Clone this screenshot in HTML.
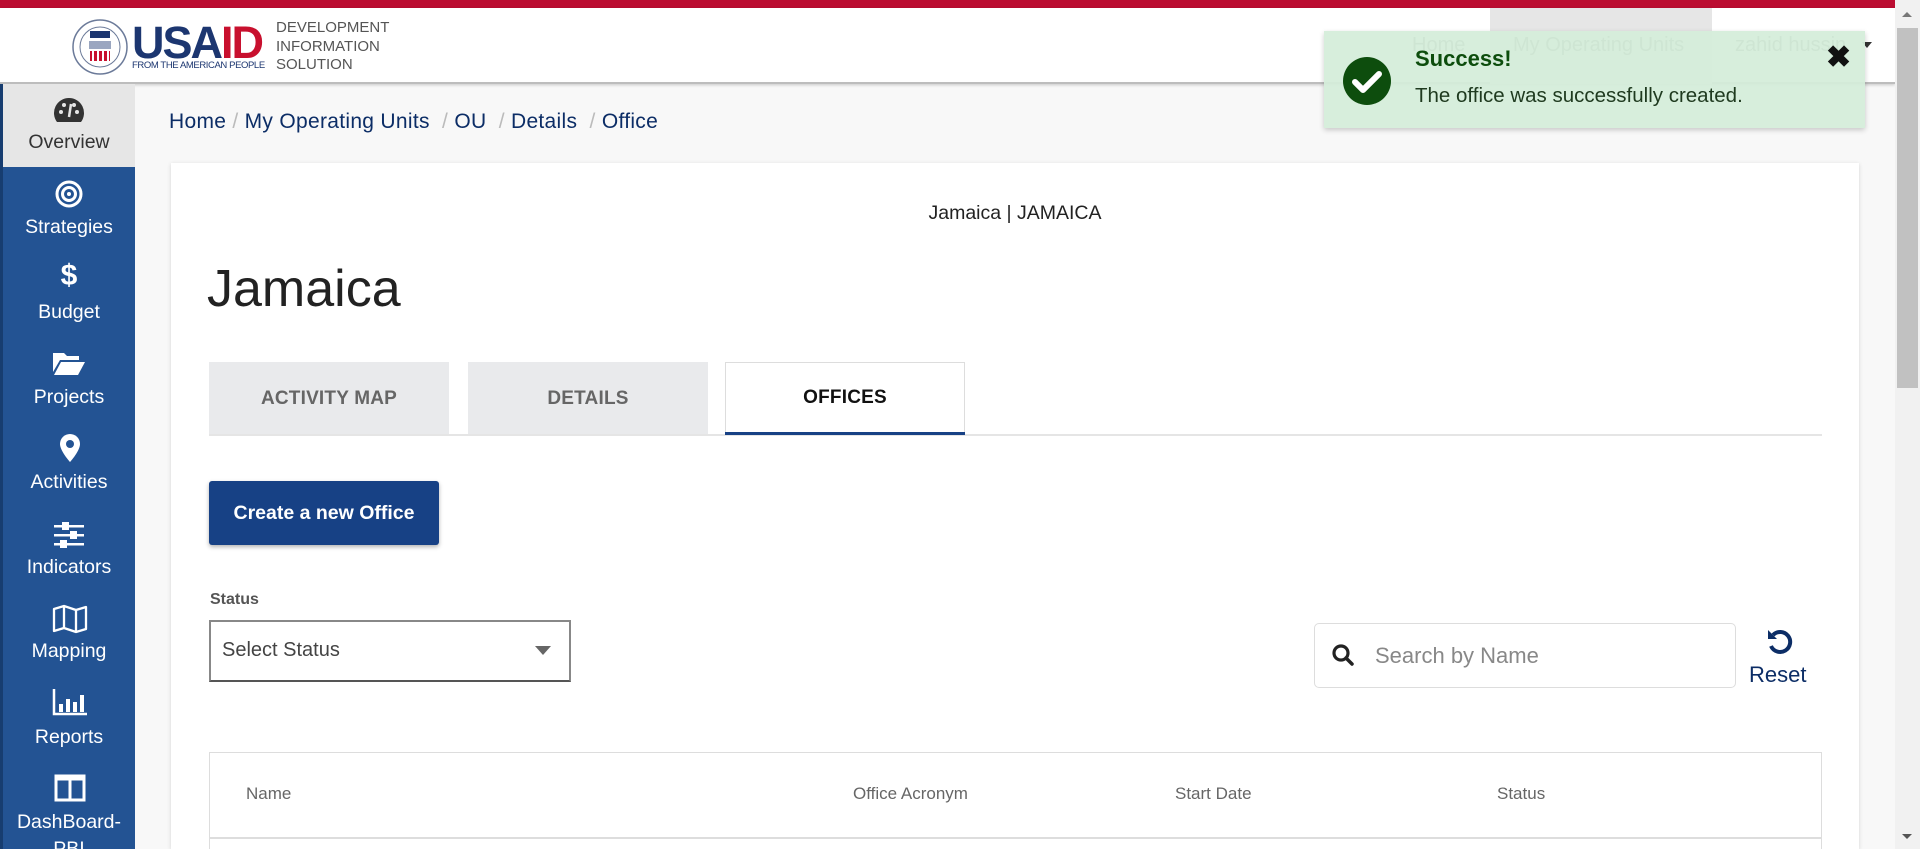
<!DOCTYPE html>
<html style="overflow:hidden"><head><meta charset="utf-8"><style>
*{box-sizing:border-box;margin:0;padding:0}
html,body{width:1920px;height:849px;overflow:hidden}
body{background:#f8f8f8;font-family:"Liberation Sans",Arial,sans-serif;position:relative}
.abs{position:absolute}
.top{left:0;top:0;width:1895px;height:8px;background:#bb0d31}
.hdr{left:0;top:8px;width:1895px;height:76px;background:#fff;border-bottom:2px solid #bdbdbd;box-shadow:0 1px 3px rgba(0,0,0,.2)}
.side{left:0;top:84px;width:135px;height:765px;background:#235393;border-left:3px solid #173d70}
.lbl{position:absolute;left:0;width:132px;text-align:center;color:#fff;font-size:19.5px}
.scroll{left:1895px;top:0;width:25px;height:849px;background:#f1f1f1}
.card{left:171px;top:163px;width:1688px;height:686px;background:#fff;box-shadow:0 1px 4px rgba(0,0,0,.15)}
.tab{position:absolute;top:362px;height:73px;width:240px;background:#e9eaec;color:#666;font-size:19px;font-weight:bold;text-align:center;line-height:73px;letter-spacing:.2px}
</style></head><body>
<div class="abs top"></div>
<div class="abs hdr"></div>
<svg class="abs" style="left:70px;top:17px" width="60" height="60" viewBox="0 0 60 60">
<circle cx="30" cy="30" r="27" fill="#fff" stroke="#6b7a99" stroke-width="1.5"/>
<circle cx="30" cy="30" r="20" fill="none" stroke="#6b7a99" stroke-width="1"/>
<rect x="20" y="14" width="20" height="7" fill="#1c3670"/>
<rect x="19" y="24" width="22" height="8" fill="#9aa6c0"/>
<rect x="20" y="34" width="20" height="10" fill="#c8102e"/>
<rect x="22" y="34" width="2" height="10" fill="#fff"/><rect x="27" y="34" width="2" height="10" fill="#fff"/><rect x="32" y="34" width="2" height="10" fill="#fff"/><rect x="37" y="34" width="2" height="10" fill="#fff"/>
</svg>
<div class="abs" style="left:132px;top:18px;font-size:45px;font-weight:bold;letter-spacing:-2px;line-height:50px"><span style="color:#1c3670">USA</span><span style="color:#c8102e">ID</span></div>
<div class="abs" style="left:132px;top:60px;font-size:9.5px;color:#1c3670;letter-spacing:-.4px">FROM THE AMERICAN PEOPLE</div>
<div class="abs" style="left:276px;top:19px;font-size:15px;line-height:18.5px;color:#555">DEVELOPMENT<br>INFORMATION<br>SOLUTION</div>
<div class="abs" style="left:1490px;top:8px;width:222px;height:76px;background:#e6e6e6"></div>
<div class="abs" style="left:1412px;top:34px;font-size:20px;color:#666">Home</div>
<div class="abs" style="left:1513px;top:34px;font-size:20px;color:#666">My Operating Units</div>
<div class="abs" style="left:1735px;top:34px;font-size:20px;color:#666">zahid hussin</div>
<div class="abs" style="left:1862px;top:42px;border-left:5px solid transparent;border-right:5px solid transparent;border-top:6px solid #333"></div>
<div class="abs scroll"></div>
<div class="abs" style="left:1897px;top:28px;width:21px;height:360px;background:#c1c1c1"></div>
<div class="abs" style="left:1902px;top:12px;border-left:5px solid transparent;border-right:5px solid transparent;border-bottom:5px solid #777"></div>
<div class="abs" style="left:1902px;top:834px;border-left:5px solid transparent;border-right:5px solid transparent;border-top:5px solid #555"></div>
<div class="abs side">
 <div style="position:absolute;left:0;top:0;width:132px;height:83px;background:#e6e6e6"></div>
</div>
<svg class="abs" style="left:53px;top:97px" width="32" height="26" viewBox="0 0 32 26"><path d="M16 1A15 15 0 0 0 4 25h24A15 15 0 0 0 16 1z" fill="#333"/><circle cx="8" cy="15" r="2" fill="#e6e6e6"/><circle cx="11" cy="8" r="2" fill="#e6e6e6"/><circle cx="21" cy="8" r="2" fill="#e6e6e6"/><circle cx="24" cy="15" r="2" fill="#e6e6e6"/><path d="M18 7l-2 13" stroke="#e6e6e6" stroke-width="2.5"/></svg>
<div class="lbl" style="top:131px;color:#333;left:3px">Overview</div>
<svg class="abs" style="left:55px;top:180px" width="28" height="28" viewBox="0 0 28 28"><circle cx="14" cy="14" r="12" fill="none" stroke="#fff" stroke-width="3"/><circle cx="14" cy="14" r="6.5" fill="none" stroke="#fff" stroke-width="3"/><circle cx="14" cy="14" r="2" fill="#fff"/></svg>
<div class="lbl" style="top:216px;left:3px">Strategies</div>
<div class="abs" style="left:3px;top:259px;width:132px;text-align:center;color:#fff;font-size:30px;font-weight:bold">$</div>
<div class="lbl" style="top:301px;left:3px">Budget</div>
<svg class="abs" style="left:52px;top:350px" width="34" height="26" viewBox="0 0 34 26"><path d="M1 3h11l3 3h12v4H8L1 22z" fill="#fff"/><path d="M9 12h24l-7 13H2z" fill="#fff"/></svg>
<div class="lbl" style="top:386px;left:3px">Projects</div>
<svg class="abs" style="left:59px;top:433px" width="22" height="30" viewBox="0 0 22 30"><path d="M11 1a10 10 0 0 0-10 10c0 7 10 18 10 18s10-11 10-18A10 10 0 0 0 11 1z" fill="#fff"/><circle cx="11" cy="11" r="4" fill="#235393"/></svg>
<div class="lbl" style="top:471px;left:3px">Activities</div>
<svg class="abs" style="left:54px;top:522px" width="30" height="26" viewBox="0 0 30 26"><g fill="#fff"><rect x="0" y="3" width="30" height="2.5"/><rect x="0" y="12" width="30" height="2.5"/><rect x="0" y="21" width="30" height="2.5"/><rect x="8" y="0" width="7" height="8"/><rect x="16" y="9" width="7" height="8"/><rect x="6" y="18" width="7" height="8"/></g></svg>
<div class="lbl" style="top:556px;left:3px">Indicators</div>
<svg class="abs" style="left:52px;top:604px" width="36" height="30" viewBox="0 0 36 30"><path d="M2 5l10-3 12 4 10-3v22l-10 3-12-4-10 3z M12 2v22 M24 6v22" fill="none" stroke="#fff" stroke-width="2.3" stroke-linejoin="round"/></svg>
<div class="lbl" style="top:640px;left:3px">Mapping</div>
<svg class="abs" style="left:52px;top:688px" width="36" height="28" viewBox="0 0 36 28"><path d="M2 1v25h33" fill="none" stroke="#fff" stroke-width="2.5"/><g fill="#fff"><rect x="7" y="16" width="4" height="8"/><rect x="14" y="11" width="4" height="13"/><rect x="21" y="14" width="4" height="10"/><rect x="28" y="7" width="4" height="17"/></g></svg>
<div class="lbl" style="top:726px;left:3px">Reports</div>
<svg class="abs" style="left:54px;top:774px" width="32" height="28" viewBox="0 0 32 28"><rect x="2" y="2" width="28" height="24" fill="none" stroke="#fff" stroke-width="3"/><path d="M16 2v24M2 5h28" stroke="#fff" stroke-width="3"/></svg>
<div class="lbl" style="top:811px;left:3px">DashBoard-</div>
<div class="lbl" style="top:838px;left:3px">PBI</div>
<div class="abs" style="left:169px;top:110px;font-size:21px;color:#0c2d66;white-space:pre;letter-spacing:.3px">Home <span style="color:#bbb">/</span> My Operating Units  <span style="color:#bbb">/</span> OU  <span style="color:#bbb">/</span> Details  <span style="color:#bbb">/</span> Office</div>
<div class="abs card"></div>
<div class="abs" style="left:171px;top:202px;width:1688px;text-align:center;font-size:19.5px;color:#222">Jamaica | JAMAICA</div>
<div class="abs" style="left:207px;top:259px;font-size:52px;color:#222">Jamaica</div>
<div class="tab" style="left:209px">ACTIVITY MAP</div>
<div class="tab" style="left:468px">DETAILS</div>
<div class="tab" style="left:725px;background:#fff;border:1px solid #ddd;border-bottom:none;color:#111;line-height:70px">OFFICES</div>
<div class="abs" style="left:209px;top:434px;width:1613px;height:2px;background:#e5e5e5"></div>
<div class="abs" style="left:725px;top:432px;width:240px;height:3px;background:#174185"></div>
<div class="abs" style="left:209px;top:481px;width:230px;height:64px;background:#174185;border-radius:3px;box-shadow:0 2px 4px rgba(0,0,0,.3);color:#fff;font-size:19.5px;font-weight:bold;text-align:center;line-height:64px">Create a new Office</div>
<div class="abs" style="left:210px;top:591px;font-size:16px;font-weight:bold;color:#555">Status</div>
<div class="abs" style="left:209px;top:620px;width:362px;height:62px;border:2px solid #888;border-bottom-color:#555;background:#fff"></div>
<div class="abs" style="left:222px;top:639px;font-size:20px;color:#444">Select Status</div>
<div class="abs" style="left:535px;top:646px;border-left:8px solid transparent;border-right:8px solid transparent;border-top:9px solid #666"></div>
<div class="abs" style="left:1314px;top:623px;width:422px;height:65px;border:1.5px solid #ddd;border-radius:5px;background:#fff"></div>
<svg class="abs" style="left:1331px;top:643px" width="24" height="24" viewBox="0 0 24 24"><circle cx="10" cy="10" r="7" fill="none" stroke="#222" stroke-width="3.2"/><path d="M15 15l6 6" stroke="#222" stroke-width="3.5" stroke-linecap="round"/></svg>
<div class="abs" style="left:1375px;top:643px;font-size:22px;color:#888">Search by Name</div>
<svg class="abs" style="left:1765px;top:627px" width="30" height="30" viewBox="0 0 30 30"><path d="M8 8A10 10 0 1 1 6 19" fill="none" stroke="#0c2d66" stroke-width="4"/><path d="M3 3v9h9z" fill="#0c2d66"/></svg>
<div class="abs" style="left:1749px;top:662px;font-size:22px;color:#0c2d66">Reset</div>
<div class="abs" style="left:209px;top:752px;width:1613px;height:97px;border:1.5px solid #ddd;border-bottom:none;background:#fff"></div>
<div class="abs" style="left:209px;top:837px;width:1613px;height:1.5px;background:#ddd"></div>
<div class="abs" style="left:246px;top:784px;font-size:17px;color:#666">Name</div>
<div class="abs" style="left:853px;top:784px;font-size:17px;color:#666">Office Acronym</div>
<div class="abs" style="left:1175px;top:784px;font-size:17px;color:#666">Start Date</div>
<div class="abs" style="left:1497px;top:784px;font-size:17px;color:#666">Status</div>
<div class="abs" style="left:1324px;top:31px;width:541px;height:97px;background:rgba(212,237,218,.94);box-shadow:0 2px 5px rgba(0,0,0,.2)"></div>
<svg class="abs" style="left:1342px;top:56px" width="50" height="50" viewBox="0 0 50 50"><circle cx="25" cy="25" r="24" fill="#0d4d0d"/><path d="M13 26l8 8 16-16" fill="none" stroke="#fff" stroke-width="6" stroke-linecap="round" stroke-linejoin="round"/></svg>
<div class="abs" style="left:1415px;top:46px;font-size:22px;font-weight:bold;color:#0d4d0d">Success!</div>
<div class="abs" style="left:1415px;top:84px;font-size:20.5px;color:#1f3a1f">The office was successfully created.</div>
<div class="abs" style="left:1826px;top:40px;font-size:30px;font-weight:bold;color:#111">✖</div>
</body></html>
